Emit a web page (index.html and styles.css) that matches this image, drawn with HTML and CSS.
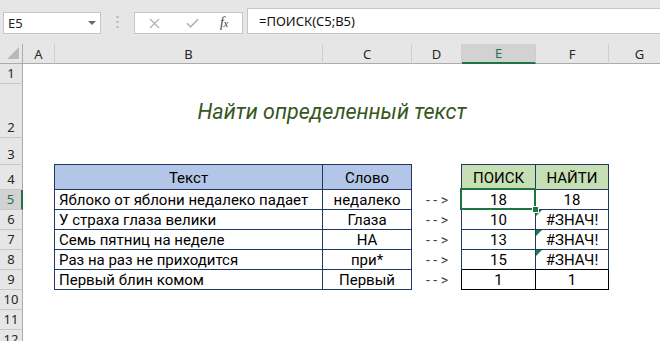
FILE: index.html
```html
<!DOCTYPE html>
<html lang="ru">
<head>
<meta charset="utf-8">
<title>ПОИСК</title>
<link rel="stylesheet" href="styles.css">
</head>
<body>
<div class="topbar">
  <div class="namebox">
    <span class="nb-text">E5</span>
    <svg class="nb-arrow" width="8" height="4" viewBox="0 0 8 4"><path d="M0 0H8L4 4Z" fill="#6a6a6a"/></svg>
  </div>
  <div class="dots">
    <svg width="3" height="13" viewBox="0 0 3 13"><rect x="0.5" y="0" width="2" height="2" fill="#b4b4b4"/><rect x="0.5" y="5" width="2" height="2" fill="#b4b4b4"/><rect x="0.5" y="10" width="2" height="2" fill="#b4b4b4"/></svg>
  </div>
  <div class="fxbox">
    <svg class="ico-x" width="11" height="11" viewBox="0 0 11 11"><path d="M1 1L10 10M10 1L1 10" stroke="#b3b3b3" stroke-width="1.3" fill="none"/></svg>
    <svg class="ico-ok" width="13" height="10" viewBox="0 0 13 10"><path d="M1 5.2L4.6 8.8L12 1.2" stroke="#b3b3b3" stroke-width="1.6" fill="none"/></svg>
    <span class="fx"><i>f</i><i class="fxx">x</i></span>
  </div>
  <div class="formula">=ПОИСК(C5;B5)</div>
</div>

<div class="sheet">
  <div class="ch corner"><svg width="12" height="12" viewBox="0 0 12 12"><path d="M12 0V12H0Z" fill="#b9b9b9"/></svg></div>
  <div class="ch">A</div>
  <div class="ch">B</div>
  <div class="ch">C</div>
  <div class="ch">D</div>
  <div class="ch sel">E</div>
  <div class="ch">F</div>
  <div class="ch">G</div>

  <div class="rh">1</div><div class="fill"></div>

  <div class="rh">2</div><div class="c"></div>
  <div class="title">Найти определенный текст</div>
  <div class="c"></div>

  <div class="rh">3</div><div class="fill"></div>

  <div class="rh">4</div><div class="c"></div>
  <div class="t hb top lft mid">Текст</div>
  <div class="t hb top mid">Слово</div>
  <div class="c"></div>
  <div class="t hg top lft mid">ПОИСК</div>
  <div class="t hg top mid">НАЙТИ</div>
  <div class="c"></div>

  <div class="rh sel">5</div><div class="c"></div>
  <div class="t lft">Яблоко от яблони недалеко падает</div>
  <div class="t mid">недалеко</div>
  <div class="c arrow">- - &gt;</div>
  <div class="t lft mid active">18<span class="selbox"></span><span class="handle"></span></div>
  <div class="t mid">18</div>
  <div class="c"></div>

  <div class="rh">6</div><div class="c"></div>
  <div class="t lft">У страха глаза велики</div>
  <div class="t mid">Глаза</div>
  <div class="c arrow">- - &gt;</div>
  <div class="t lft mid">10</div>
  <div class="t mid err">#ЗНАЧ!</div>
  <div class="c"></div>

  <div class="rh">7</div><div class="c"></div>
  <div class="t lft">Семь пятниц на неделе</div>
  <div class="t mid">НА</div>
  <div class="c arrow">- - &gt;</div>
  <div class="t lft mid">13</div>
  <div class="t mid err">#ЗНАЧ!</div>
  <div class="c"></div>

  <div class="rh">8</div><div class="c"></div>
  <div class="t lft">Раз на раз не приходится</div>
  <div class="t mid">при*</div>
  <div class="c arrow">- - &gt;</div>
  <div class="t lft mid bb">15</div>
  <div class="t mid err bb">#ЗНАЧ!</div>
  <div class="c"></div>

  <div class="rh">9</div><div class="c"></div>
  <div class="t lft">Первый блин комом</div>
  <div class="t mid">Первый</div>
  <div class="c arrow">- - &gt;</div>
  <div class="t lft mid blk">1</div>
  <div class="t mid blk">1</div>
  <div class="c"></div>

  <div class="rh">10</div><div class="fill"></div>
  <div class="rh">11</div><div class="fill"></div>
  <div class="rh">12</div><div class="fill"></div>
</div>
</body>
</html>
```

FILE: styles.css
```css
* { box-sizing: border-box; }

body {
  margin: 0;
  width: 660px;
  height: 341px;
  overflow: hidden;
  background: #ffffff;
  font-family: Roboto, "Noto Sans", sans-serif;
  color: #000;
}

/* ---------- formula bar ---------- */
.topbar {
  height: 44px;
  background: #e6e6e6;
  display: flex;
  align-items: flex-start;
  padding-left: 3px;
}

.namebox {
  margin-top: 12px;
  width: 98px;
  height: 22px;
  background: #fff;
  border: 1px solid #c6c6c6;
  display: flex;
  align-items: center;
  justify-content: space-between;
  padding: 0 4px 0 4px;
}

.nb-text {
  font-family: "Noto Sans", sans-serif;
  font-size: 13px;
  color: #222;
}

.dots {
  width: 33px;
  margin-top: 16px;
  display: flex;
  justify-content: center;
}

.fxbox {
  margin-top: 12px;
  width: 109px;
  height: 22px;
  background: #fff;
  border: 1px solid #c6c6c6;
  display: flex;
  align-items: center;
  padding-left: 14px;
}

.ico-x { margin-right: 26px; }
.ico-ok { margin-right: 21px; }

.fx {
  font-family: "Liberation Serif", serif;
  font-size: 14px;
  color: #444;
  letter-spacing: -0.5px;
}

.fxx {
  font-size: 11px;
}

.formula {
  margin-top: 8px;
  margin-left: 4px;
  flex: 1;
  height: 26px;
  background: #fff;
  border: 1px solid #c6c6c6;
  border-right: none;
  padding-left: 11px;
  display: flex;
  align-items: center;
  font-family: "Noto Sans", sans-serif;
  font-size: 13px;
  color: #111;
}

/* ---------- sheet ---------- */
.sheet {
  display: grid;
  grid-template-columns: 23px 32px 268px 89px 50px 74px 73px 62px;
  grid-template-rows: 20px 20px 54px 27px 25px repeat(7, 20px) 20px;
  width: 671px;
}

.ch {
  background: #e6e6e6;
  border-right: 1px solid #cfcfcf;
  border-bottom: 1px solid #ababab;
  display: flex;
  align-items: center;
  justify-content: center;
  font-family: "Noto Sans", sans-serif;
  font-size: 13px;
  color: #262626;
}

.ch.corner {
  border-right: 1px solid #ababab;
  align-items: flex-end;
  justify-content: flex-end;
  padding: 0 3px 4px 0;
}

.ch.sel {
  background: #d2d2d2;
  color: #217346;
  border-bottom: 2px solid #217346;
}

.rh {
  background: #e6e6e6;
  border-right: 1px solid #ababab;
  border-bottom: 1px solid #c8c8c8;
  display: flex;
  align-items: flex-end;
  justify-content: center;
  padding-bottom: 1px;
  font-family: "Noto Sans", sans-serif;
  font-size: 13px;
  color: #262626;
}

.rh.sel {
  background: #d2d2d2;
  color: #217346;
  border-right: 2px solid #217346;
}

.fill { grid-column: span 7; }

.title {
  grid-column: span 5;
  display: flex;
  align-items: center;
  justify-content: center;
  font-style: italic;
  font-size: 21.5px;
  color: #375623;
  padding-top: 1px;
}

.c {
  display: flex;
  align-items: center;
  justify-content: center;
}

.arrow {
  font-size: 14px;
  color: #3f3f3f;
  white-space: pre;
}

/* table cells */
.t {
  position: relative;
  border-right: 1px solid #1f3864;
  border-bottom: 1px solid #1f3864;
  display: flex;
  align-items: center;
  padding: 1px 4px 0 4px;
  font-size: 15px;
  white-space: nowrap;
}

.t.mid { justify-content: center; }

.t.lft { box-shadow: -1px 0 0 #1f3864; }
.t.top { box-shadow: 0 -1px 0 #1f3864; }
.t.top.lft { box-shadow: -1px 0 0 #1f3864, 0 -1px 0 #1f3864, -1px -1px 0 #1f3864; }

.hb { background: #b4c6e7; }
.hg { background: #c6e0b4; }

.t.bb { border-bottom-color: #000; }
.t.blk { border-right-color: #000; border-bottom-color: #000; }
.t.blk.lft { box-shadow: -1px 0 0 #000; }

.t.err::before {
  content: "";
  position: absolute;
  left: 0;
  top: 0;
  border-top: 6px solid #1e7b45;
  border-right: 6px solid transparent;
}

.t.active { z-index: 2; }

.selbox {
  position: absolute;
  left: -2px;
  top: -2px;
  width: 76px;
  height: 22px;
  border: 2px solid #217346;
}

.handle {
  position: absolute;
  left: 70px;
  top: 16px;
  width: 7px;
  height: 7px;
  background: #217346;
  border: 1px solid #fff;
}
```
